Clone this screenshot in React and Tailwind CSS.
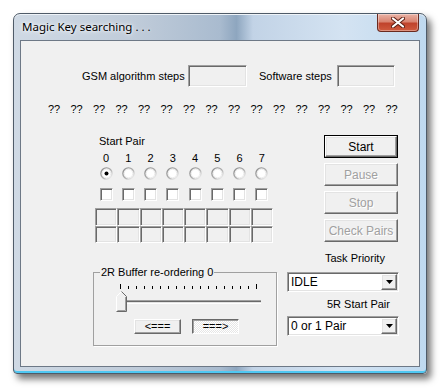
import React from 'react';

const sunken =
  'border border-t-[#a0a0a0] border-l-[#a0a0a0] border-b-white border-r-white shadow-[inset_1px_1px_0_#696969,inset_-1px_-1px_0_#e3e3e3]';
const raised =
  'border border-t-white border-l-white border-b-[#696969] border-r-[#696969] shadow-[inset_-1px_-1px_0_#a0a0a0,inset_1px_1px_0_#e3e3e3] bg-[#f0f0f0]';
const disabledText = 'text-[#a0a0a0] [text-shadow:1px_1px_0_#ffffff]';

const Radio = ({ checked }) => (
  <svg width="13" height="13" viewBox="0 0 13 13">
    <defs>
      <linearGradient id="rg" x1="0" y1="0" x2="1" y2="1">
        <stop offset="0" stopColor="#8a8a8a" />
        <stop offset="0.55" stopColor="#b0b0b0" />
        <stop offset="1" stopColor="#ffffff" />
      </linearGradient>
    </defs>
    <circle cx="6.5" cy="6.5" r="5.6" fill="#ffffff" stroke="url(#rg)" strokeWidth="1.4" />
    <circle cx="6.5" cy="6.5" r="4.3" fill="none" stroke="#e6e6e6" strokeWidth="0.8" />
    {checked && <circle cx="6.5" cy="6.5" r="2" fill="#000000" />}
  </svg>
);

const Button = ({ label, disabled, isDefault }) => {
  const inner = (
    <div className={`${raised} w-full h-full flex items-center justify-center text-[12px] ${disabled ? disabledText : 'text-black'}`}>
      {label}
    </div>
  );
  return isDefault ? (
    <div className="w-[74px] h-[23px] border border-black">{inner}</div>
  ) : (
    <div className="w-[74px] h-[23px]">{inner}</div>
  );
};

const Combo = ({ value }) => (
  <div className={`${sunken} w-[112px] h-[20px] bg-white flex items-stretch p-[1px]`}>
    <div className="flex-1 flex items-center pl-[2px] text-[12px] text-black">{value}</div>
    <div className={`${raised} w-[16px] flex items-center justify-center`}>
      <svg width="7" height="4" viewBox="0 0 7 4">
        <path d="M0 0h7L3.5 4z" fill="#000" />
      </svg>
    </div>
  </div>
);

const Trackbar = () => {
  const ticks = Array.from({ length: 18 }, (_, i) => 7 + i * 8);
  return (
    <svg width="152" height="30" viewBox="0 0 152 30" className="block">
      {ticks.map((x, i) => (
        <line
          key={x}
          x1={x + 0.5}
          x2={x + 0.5}
          y1={i === 0 || i === 17 ? 1 : 3}
          y2="6"
          stroke="#000"
          strokeWidth="1"
        />
      ))}
      <line x1="7" x2="148" y1="17.5" y2="17.5" stroke="#a0a0a0" />
      <line x1="7" x2="148" y1="18.5" y2="18.5" stroke="#696969" />
      <line x1="7" x2="148" y1="19.5" y2="19.5" stroke="#e3e3e3" />
      <line x1="7" x2="148" y1="20.5" y2="20.5" stroke="#ffffff" />
      <path d="M3.5 13.5L8.5 8.5L13.5 13.5V28.5H3.5Z" fill="#f0f0f0" />
      <path d="M3.5 28L3.5 13.5L8.5 8.5" fill="none" stroke="#ffffff" />
      <path d="M8.5 8.5L13.5 13.5V28.5H3.5" fill="none" stroke="#696969" />
      <path d="M12.5 14V27.5H4.5" fill="none" stroke="#a0a0a0" />
    </svg>
  );
};

const cols = [0, 1, 2, 3, 4, 5, 6, 7];

export default function App() {
  return (
    <div className="w-[442px] h-[390px] bg-white font-['Liberation_Sans',Arial,sans-serif] overflow-hidden">
      <div className="ml-[13px] mt-[13px] w-[414px] h-[361px] rounded-t-[7px] rounded-b-[4px] border border-[#4f5b68] bg-[linear-gradient(90deg,#cfd9e4_0%,#bfcbd9_30%,#a9bbcf_50%,#8ea6bf_54%,#c2d3e6_58%,#d4e3f2_80%,#bfd9ef_100%)] shadow-[4px_5px_7px_rgba(0,0,0,0.55),inset_0_1px_0_#eef3f8,inset_0_-2px_0_#4fc8f2] flex flex-col px-[6px] pb-[6px]">
        <div className="h-[26px] flex items-start justify-between">
          <div className="pt-[6px] pl-[2px] text-[11.5px] font-['Noto_Sans',sans-serif] leading-[14px] text-black [text-shadow:0_0_6px_#ffffff,0_0_3px_#ffffff]">
            Magic Key searching . . .
          </div>
          <div className="mr-[1px] w-[42px] h-[18px] rounded-b-[4px] border border-t-0 border-[#6a2a1f] bg-[linear-gradient(180deg,#eab3a6_0%,#d98471_45%,#c0432c_55%,#cf5b3f_100%)] flex items-center justify-center shadow-[inset_0_0_0_1px_rgba(255,255,255,0.35)]">
            <svg width="14" height="11" viewBox="0 0 14 11">
              <path d="M2 1.5L12 9.5M12 1.5L2 9.5" stroke="#5a1d12" strokeWidth="4" strokeLinecap="round" />
              <path d="M2 1.5L12 9.5M12 1.5L2 9.5" stroke="#ffffff" strokeWidth="2.2" strokeLinecap="round" />
            </svg>
          </div>
        </div>

        <div className="flex-1 border border-[#6d7886] bg-[#f0f0f0] text-[11px] text-black flex flex-col">
          <div className="mt-[24px] ml-[61px] h-[22px] flex items-center">
            <span className="w-[106px] whitespace-nowrap">GSM algorithm steps</span>
            <div className={`${sunken} w-[59px] h-[22px]`} />
            <span className="ml-[12px] w-[78px] whitespace-nowrap">Software steps</span>
            <div className={`${sunken} w-[58px] h-[22px]`} />
          </div>

          <div className="mt-[16px] ml-[27px] h-[12px] flex leading-[12px]">
            {Array.from({ length: 16 }, (_, i) => (
              <span key={i} className="w-[22.5px] shrink-0">??</span>
            ))}
          </div>

          <div className="mt-[20px] ml-[72px] flex gap-[10px]">
            <div className="w-[184px] flex flex-col">
              <div className="ml-[2px] w-[178px] flex flex-col">
                <div className="ml-[4px] h-[12px] leading-[12px]">Start Pair</div>
                <div className="mt-[5px] grid grid-cols-8 h-[12px] leading-[12px]">
                  {cols.map((c) => (
                    <span key={c} className="text-center">{c}</span>
                  ))}
                </div>
                <div className="mt-[3px] grid grid-cols-8 h-[13px]">
                  {cols.map((c) => (
                    <div key={c} className="flex justify-center">
                      <Radio checked={c === 0} />
                    </div>
                  ))}
                </div>
                <div className="mt-[8px] grid grid-cols-8 h-[13px]">
                  {cols.map((c) => (
                    <div key={c} className="flex justify-center">
                      <div className={`${sunken} w-[13px] h-[13px] bg-white`} />
                    </div>
                  ))}
                </div>
                <div className="mt-[7px] grid grid-cols-8 grid-rows-2 h-[35px]">
                  {Array.from({ length: 16 }, (_, i) => (
                    <div key={i} className={sunken} />
                  ))}
                </div>
              </div>

              <fieldset className="mt-[23px] border border-[#a0a0a0] shadow-[1px_1px_0_#ffffff] flex flex-col">
                <legend className="ml-[6px] px-[1px] h-[13px] leading-[13px]">2R Buffer re-ordering 0</legend>
                <div className="mt-[4px] ml-[19px]">
                  <Trackbar />
                </div>
                <div className="mt-[6px] mb-[11px] flex justify-center gap-[11px] pl-[3px]">
                  <div className={`${raised} w-[47px] h-[15px] flex items-center justify-center text-[11px] leading-[11px]`}>
                    &lt;===
                  </div>
                  <div className="w-[47px] h-[15px] border border-t-[#696969] border-l-[#696969] border-b-white border-r-white shadow-[inset_1px_1px_0_#a0a0a0] bg-[repeating-conic-gradient(#ffffff_0_25%,#e6e6e6_0_50%)] bg-[length:2px_2px] flex items-center justify-center text-[11px] leading-[11px]">
                    ===&gt;
                  </div>
                </div>
              </fieldset>
            </div>

            <div className="w-[112px] flex flex-col">
              <div className="ml-[37px] flex flex-col gap-[5px]">
                <Button label="Start" isDefault />
                <Button label="Pause" disabled />
                <Button label="Stop" disabled />
                <Button label="Check Pairs" disabled />
              </div>
              <div className="mt-[10px] ml-[38px] h-[12px] leading-[12px] text-[11px] whitespace-nowrap">Task Priority</div>
              <div className="mt-[8px]">
                <Combo value="IDLE" />
              </div>
              <div className="mt-[6px] ml-[40px] h-[12px] leading-[12px] text-[11px] whitespace-nowrap">5R Start Pair</div>
              <div className="mt-[6px]">
                <Combo value="0 or 1 Pair" />
              </div>
            </div>
          </div>
        </div>
      </div>
    </div>
  );
}
